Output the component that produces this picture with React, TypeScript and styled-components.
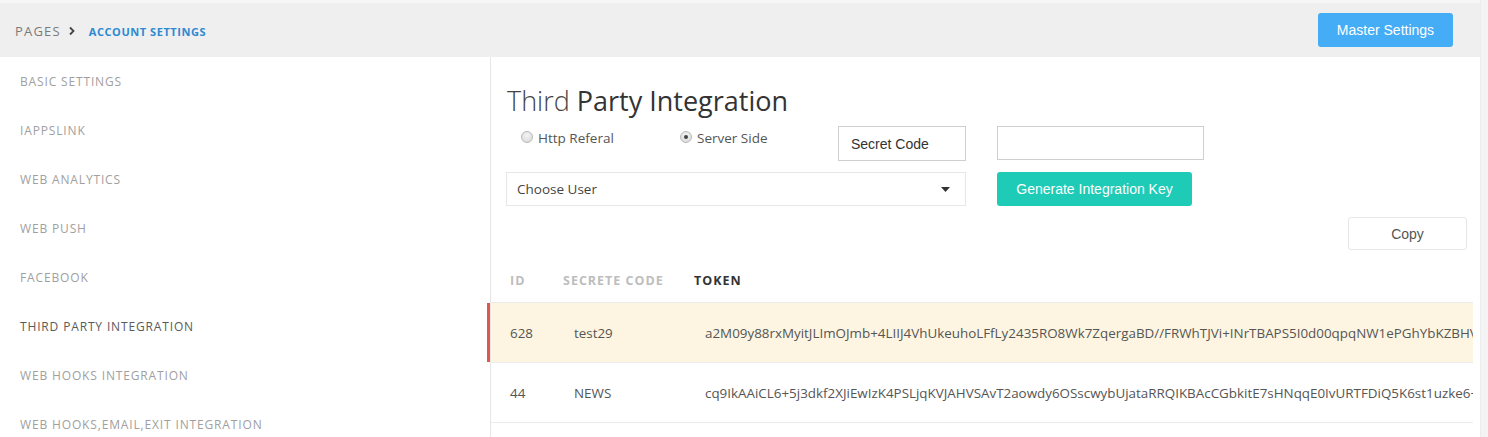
import React from "react";
import styled, { createGlobalStyle } from "styled-components";

const Global = createGlobalStyle`
  html, body { margin: 0; padding: 0; background: #fff; }
  body { font-family: "Open Sans", "Liberation Sans", sans-serif; }
  * { box-sizing: border-box; }
`;

const Shell = styled.div`
  display: flex;
  width: 1488px;
  height: 437px;
  overflow: hidden;
`;

const Page = styled.div`
  flex: 1;
  display: flex;
  flex-direction: column;
  min-width: 0;
`;

const ScrollTrack = styled.div`
  width: 8px;
  background: #f3f3f3;
  border-left: 1px solid #ececec;
`;

const Header = styled.header`
  height: 57px;
  flex-shrink: 0;
  background: #efefef;
  border-top: 3px solid #f6f6f6;
  display: flex;
  align-items: center;
  justify-content: space-between;
  padding: 0 27px 0 15px;
`;

const Crumbs = styled.nav`
  display: flex;
  align-items: center;
  gap: 7px;
  padding-top: 2px;
`;

const Crumb = styled.span<{ $active?: boolean }>`
  color: ${(p) => (p.$active ? "#2b8ad1" : "#7a7a7a")};
  font-weight: ${(p) => (p.$active ? 700 : 400)};
  font-size: ${(p) => (p.$active ? "11px" : "13px")};
  letter-spacing: ${(p) => (p.$active ? "0.55px" : "1.2px")};
`;

const Chevron = styled.svg`
  width: 8px;
  height: 10px;
  margin: 0 6px 0 0;
`;

const PrimaryButton = styled.button<{ $bg: string; $w: number }>`
  width: ${(p) => p.$w}px;
  height: 34px;
  border: none;
  border-radius: 3px;
  background: ${(p) => p.$bg};
  color: #fff;
  font-family: "Liberation Sans", Arial, sans-serif;
  font-size: 14px;
  padding: 0;
  cursor: pointer;
`;

const Body = styled.div`
  flex: 1;
  display: flex;
  min-height: 0;
`;

const Sidebar = styled.aside`
  width: 491px;
  flex-shrink: 0;
  border-right: 1px solid #e6e6e6;
  display: flex;
  flex-direction: column;
  overflow: hidden;
`;

const SideItem = styled.div<{ $active?: boolean }>`
  height: 49px;
  flex-shrink: 0;
  display: flex;
  align-items: center;
  padding-left: 20px;
  font-size: 12px;
  letter-spacing: 0.85px;
  color: ${(p) => (p.$active ? "#5a5a5a" : "#a0a0a0")};
`;

const Main = styled.main`
  flex: 1;
  min-width: 0;
  display: flex;
  flex-direction: column;
`;

const FormArea = styled.section`
  padding: 26px 13px 0 15px;
  display: flex;
  flex-direction: column;
`;

const Title = styled.h1`
  margin: 0 0 7px 1px;
  font-size: 27px;
  line-height: 36px;
  font-weight: 400;
  color: #333;
`;

const Light = styled.span`
  font-weight: 300;
  color: #444;
`;

const FormGrid = styled.div`
  display: grid;
  grid-template-columns: 460px 207px;
  column-gap: 31px;
  row-gap: 11px;
`;

const RadioLine = styled.div`
  display: flex;
  align-items: flex-start;
  padding-left: 15px;
`;

const RadioLabel = styled.label<{ $w: number }>`
  width: ${(p) => p.$w}px;
  display: flex;
  align-items: center;
  gap: 5px;
  font-size: 13.5px;
  color: #555;
  margin-top: 1px;
  height: 22px;
`;

const Radio = styled.input`
  appearance: none;
  margin: 0;
  width: 12px;
  height: 12px;
  border-radius: 50%;
  border: 1px solid #b9b9b9;
  background: radial-gradient(circle at 50% 35%, #f4f4f4, #d6d6d6);
  display: grid;
  place-items: center;
  margin-top: -2px;
  &:checked::after {
    content: "";
    width: 4px;
    height: 4px;
    border-radius: 50%;
    background: #444;
  }
`;

const TextBox = styled.div<{ $w: number; $h: number }>`
  width: ${(p) => p.$w}px;
  height: ${(p) => p.$h}px;
  border: 1px solid #cfcfcf;
  display: flex;
  align-items: center;
  padding-left: 12px;
  font-family: "Liberation Sans", Arial, sans-serif;
  font-size: 14px;
  color: #333;
  background: #fff;
`;

const Spacer = styled.div`
  flex: 1;
`;

const Select = styled.div`
  height: 34px;
  border: 1px solid #e7e7e7;
  display: flex;
  align-items: center;
  justify-content: space-between;
  padding: 0 15px 0 10px;
  font-size: 13.5px;
  color: #444;
`;

const Caret = styled.svg`
  width: 9px;
  height: 5px;
`;

const CopyRow = styled.div`
  display: flex;
  justify-content: flex-end;
  padding: 11px 13px 0 0;
`;

const GhostButton = styled.button`
  width: 119px;
  height: 33px;
  border: 1px solid #e6e6e6;
  border-radius: 3px;
  background: #fff;
  color: #555;
  font-family: "Liberation Sans", Arial, sans-serif;
  font-size: 14px;
  padding: 0;
`;

const Table = styled.div`
  margin: 7px 7px 0 0;
  display: flex;
  flex-direction: column;
`;

const cols = "64px 131px 1fr";

const HeadRow = styled.div`
  display: grid;
  grid-template-columns: ${cols};
  height: 46px;
  align-items: center;
  border-bottom: 1px solid #ececec;
  padding-top: 2px;
`;

const HeadCell = styled.div<{ $strong?: boolean; $pad: number }>`
  padding-left: ${(p) => p.$pad}px;
  font-size: 12.5px;
  font-weight: 700;
  letter-spacing: 1px;
  color: ${(p) => (p.$strong ? "#333" : "#bdbdbd")};
`;

const Row = styled.div<{ $selected?: boolean }>`
  position: relative;
  display: grid;
  grid-template-columns: ${cols};
  height: 60px;
  align-items: center;
  border-bottom: 1px solid #ececec;
  background: ${(p) => (p.$selected ? "#fdf5e1" : "#fff")};
  &::before {
    content: "";
    display: ${(p) => (p.$selected ? "block" : "none")};
    position: absolute;
    left: -4px;
    top: 0;
    bottom: 0;
    width: 3px;
    background: #e2574c;
  }
`;

const Cell = styled.div<{ $clip?: boolean }>`
  padding-left: 19px;
  font-size: 13.4px;
  color: #555;
  white-space: nowrap;
  overflow: ${(p) => (p.$clip ? "hidden" : "visible")};
  min-width: 0;
`;

const sideItems = [
  "BASIC SETTINGS",
  "IAPPSLINK",
  "WEB ANALYTICS",
  "WEB PUSH",
  "FACEBOOK",
  "THIRD PARTY INTEGRATION",
  "WEB HOOKS INTEGRATION",
  "WEB HOOKS,EMAIL,EXIT INTEGRATION",
];

const rows = [
  {
    id: "628",
    code: "test29",
    token:
      "a2M09y88rxMyitJLImOJmb+4LIIJ4VhUkeuhoLFfLy2435RO8Wk7ZqergaBD//FRWhTJVi+INrTBAPS5I0d00qpqNW1ePGhYbKZBHVgXq7w2Lm==",
    selected: true,
  },
  {
    id: "44",
    code: "NEWS",
    token:
      "cq9IkAAiCL6+5j3dkf2XJiEwIzK4PSLjqKVJAHVSAvT2aowdy6OSscwybUjataRRQIKBAcCGbkitE7sHNqqE0IvURTFDiQ5K6st1uzke6+Yp3Qw==",
  },
];

export default function App() {
  return (
    <>
      <Global />
      <Shell>
        <Page>
          <Header>
            <Crumbs>
              <Crumb>PAGES</Crumb>
              <Chevron viewBox="0 0 8 10">
                <path d="M2 1.5 L5.5 5 L2 8.5" fill="none" stroke="#444" strokeWidth="1.8" />
              </Chevron>
              <Crumb $active>ACCOUNT SETTINGS</Crumb>
            </Crumbs>
            <PrimaryButton $bg="#45acf6" $w={135}>Master Settings</PrimaryButton>
          </Header>
          <Body>
            <Sidebar>
              {sideItems.map((s) => (
                <SideItem key={s} $active={s === "THIRD PARTY INTEGRATION"}>
                  {s}
                </SideItem>
              ))}
            </Sidebar>
            <Main>
              <FormArea>
                <Title>
                  <Light>Third</Light> Party Integration
                </Title>
                <FormGrid>
                  <RadioLine>
                    <RadioLabel $w={159}>
                      <Radio type="radio" name="mode" readOnly />
                      Http Referal
                    </RadioLabel>
                    <RadioLabel $w={150}>
                      <Radio type="radio" name="mode" defaultChecked />
                      Server Side
                    </RadioLabel>
                    <Spacer />
                    <TextBox $w={128} $h={35}>Secret Code</TextBox>
                  </RadioLine>
                  <TextBox $w={207} $h={34} />
                  <Select>
                    Choose User
                    <Caret viewBox="0 0 9 5">
                      <path d="M0 0 H9 L4.5 5 Z" fill="#333" />
                    </Caret>
                  </Select>
                  <PrimaryButton $bg="#1dcbb6" $w={195}>Generate Integration Key</PrimaryButton>
                </FormGrid>
              </FormArea>
              <CopyRow>
                <GhostButton>Copy</GhostButton>
              </CopyRow>
              <Table>
                <HeadRow>
                  <HeadCell $pad={19}>ID</HeadCell>
                  <HeadCell $pad={8}>SECRETE CODE</HeadCell>
                  <HeadCell $pad={8} $strong>TOKEN</HeadCell>
                </HeadRow>
                {rows.map((r) => (
                  <Row key={r.id} $selected={r.selected}>
                    <Cell>{r.id}</Cell>
                    <Cell>{r.code}</Cell>
                    <Cell $clip>{r.token}</Cell>
                  </Row>
                ))}
              </Table>
            </Main>
          </Body>
        </Page>
        <ScrollTrack />
      </Shell>
    </>
  );
}
